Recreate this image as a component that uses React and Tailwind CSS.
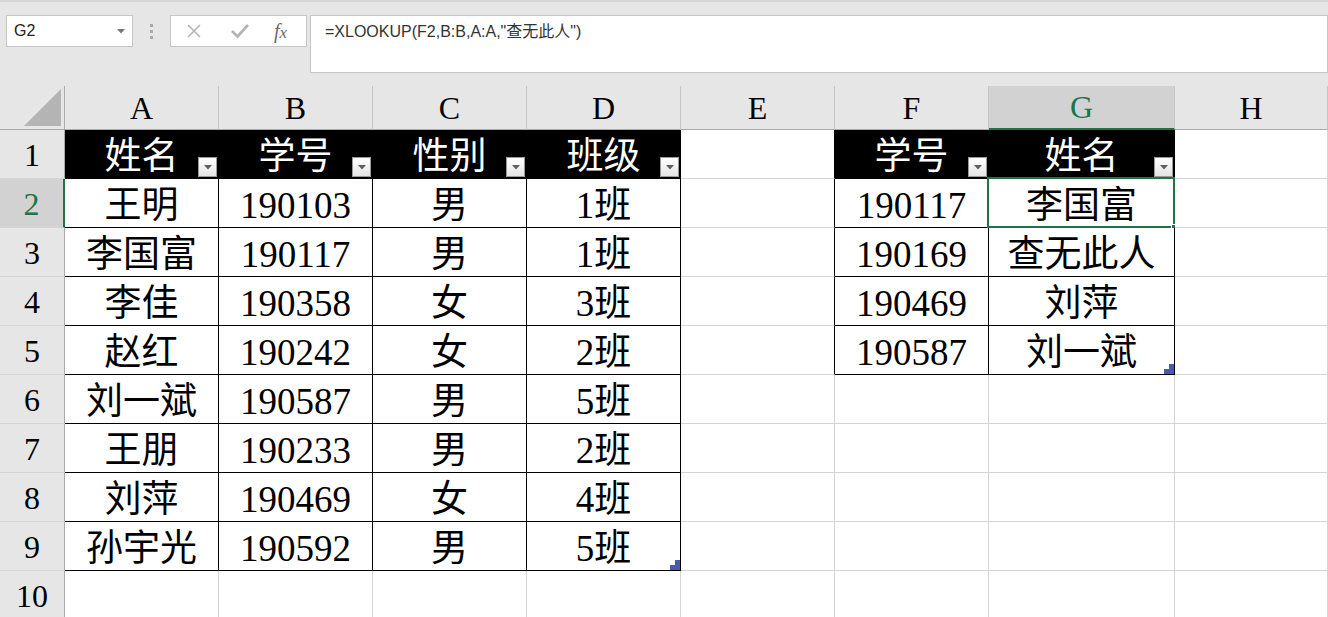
import React from "react";

const cols = ["A", "B", "C", "D", "E", "F", "G", "H"];

const table1 = [
  ["姓名", "学号", "性别", "班级"],
  ["王明", "190103", "男", "1班"],
  ["李国富", "190117", "男", "1班"],
  ["李佳", "190358", "女", "3班"],
  ["赵红", "190242", "女", "2班"],
  ["刘一斌", "190587", "男", "5班"],
  ["王朋", "190233", "男", "2班"],
  ["刘萍", "190469", "女", "4班"],
  ["孙宇光", "190592", "男", "5班"],
];

const table2 = [
  ["学号", "姓名"],
  ["190117", "李国富"],
  ["190169", "查无此人"],
  ["190469", "刘萍"],
  ["190587", "刘一斌"],
];

const FilterButton = () => (
  <div className="absolute right-[1px] bottom-[1px] w-[19px] h-[20px] bg-gradient-to-b from-white to-[#e4e4e4] border border-[#9a9a9a] flex items-center justify-center">
    <svg width="8" height="5" viewBox="0 0 8 5">
      <polygon points="0,0 8,0 4,4.5" fill="#5f5f5f" />
    </svg>
  </div>
);

const ResizeMark = () => (
  <svg className="absolute right-0 bottom-0" width="10" height="10" viewBox="0 0 10 10">
    <polygon points="5,0 10,0 10,10 0,10 0,5 5,5" fill="#4a5bae" />
  </svg>
);

const getCell = (row, col) => {
  // row: 1..10, col: 0..7 (A..H)
  const cell = { text: "", header: false, right: "grid", bottom: "grid", mark: false };
  if (row <= 9 && col <= 3) {
    cell.text = table1[row - 1][col];
    cell.header = row === 1;
    cell.right = "black";
    cell.bottom = "black";
    cell.mark = row === 9 && col === 3;
  }
  if (row <= 5 && col === 4) cell.right = "black";
  if (row <= 5 && (col === 5 || col === 6)) {
    cell.text = table2[row - 1][col - 5];
    cell.header = row === 1;
    cell.right = "black";
    cell.bottom = "black";
    cell.mark = row === 5 && col === 6;
  }
  return cell;
};

const Cell = ({ row, col }) => {
  const c = getCell(row, col);
  const selected = row === 2 && col === 6;
  return (
    <div
      className={`relative flex items-center justify-center pt-[4px] border-r border-b ${
        c.right === "black" ? "border-r-black" : "border-r-[#d4d4d4]"
      } ${c.bottom === "black" ? "border-b-black" : "border-b-[#d4d4d4]"} ${
        c.header ? "bg-black text-white" : "bg-white text-black"
      }`}
    >
      <span className="leading-none whitespace-nowrap">{c.text}</span>
      {c.header && <FilterButton />}
      {c.mark && <ResizeMark />}
      {selected && (
        <>
          <div className="absolute -left-[2px] -top-[2px] -right-[1px] -bottom-[1px] border-2 border-[#217346] pointer-events-none" />
          <div className="absolute -right-[4px] -bottom-[4px] w-[7px] h-[7px] bg-[#217346] border border-white" />
        </>
      )}
    </div>
  );
};

export default function App() {
  return (
    <div className="w-[1328px] h-[617px] overflow-hidden bg-white font-['Liberation_Sans','Noto_Sans_CJK_SC',sans-serif]">
      {/* formula bar */}
      <div className="h-[86px] bg-[#e6e6e6] border-t-2 border-t-[#d6d6d6] flex items-start pt-[13px]">
        <div className="ml-[6px] w-[127px] h-[32px] bg-white border border-[#c6c6c6] flex items-center justify-between pl-[7px] pr-[7px]">
          <span className="text-[16px] text-[#222]">G2</span>
          <svg width="8" height="5" viewBox="0 0 8 5">
            <polygon points="0,0 8,0 4,4.5" fill="#777" />
          </svg>
        </div>
        <div className="w-[37px] h-[32px] flex flex-col items-center justify-center gap-[3px]">
          <span className="w-[3px] h-[3px] bg-[#a8a8a8]" />
          <span className="w-[3px] h-[3px] bg-[#a8a8a8]" />
          <span className="w-[3px] h-[3px] bg-[#a8a8a8]" />
        </div>
        <div className="w-[137px] h-[32px] bg-white border border-[#c6c6c6] flex items-center">
          <svg className="ml-[15px]" width="16" height="16" viewBox="0 0 16 16">
            <path d="M2 2 L14 14 M14 2 L2 14" stroke="#b4b4b4" strokeWidth="1.6" fill="none" />
          </svg>
          <svg className="ml-[29px]" width="18" height="16" viewBox="0 0 18 16">
            <path d="M1 8 L6.5 13.5 L17 2" stroke="#b4b4b4" strokeWidth="2.6" fill="none" />
          </svg>
          <span className="ml-[25px] text-[20px] leading-none italic text-[#6a6a6a] font-['Liberation_Serif',serif]">
            f<span className="text-[17px]">x</span>
          </span>
        </div>
        <div className="ml-[3px] flex-1 h-[58px] bg-white border border-[#c6c6c6] pl-[14px] pt-[4px]">
          <span className="text-[16px] text-[#333]">=XLOOKUP(F2,B:B,A:A,"查无此人")</span>
        </div>
      </div>

      {/* sheet */}
      <div className="grid grid-cols-[65px_154px_154px_154px_154px_154px_154px_186px_1fr] grid-rows-[44px_repeat(10,49px)] font-['Liberation_Serif','Noto_Sans_CJK_SC',serif] text-[37px]">
        {/* corner */}
        <div className="relative bg-[#e6e6e6] border-r border-b border-r-[#ababab] border-b-[#ababab]">
          <svg className="absolute right-[3px] bottom-[3px]" width="37" height="37" viewBox="0 0 37 37">
            <polygon points="37,0 37,37 0,37" fill="#b4b4b4" />
          </svg>
        </div>
        {cols.map((c) => (
          <div
            key={c}
            className={`flex items-center justify-center text-[32px] border-r border-r-[#c6c6c6] ${
              c === "G"
                ? "bg-[#d2d2d2] text-[#217346] border-b-2 border-b-[#217346]"
                : "bg-[#e6e6e6] text-black border-b border-b-[#ababab]"
            }`}
          >
            {c}
          </div>
        ))}
        {Array.from({ length: 10 }, (_, i) => i + 1).map((row) => (
          <React.Fragment key={row}>
            <div
              className={`flex items-center justify-center text-[32px] pt-[2px] border-b border-b-[#d4d4d4] ${
                row === 2
                  ? "bg-[#d2d2d2] text-[#217346] border-r-2 border-r-[#217346]"
                  : "bg-[#e6e6e6] text-black border-r border-r-[#ababab]"
              }`}
            >
              {row}
            </div>
            {cols.map((c, ci) => (
              <Cell key={c} row={row} col={ci} />
            ))}
          </React.Fragment>
        ))}
      </div>
    </div>
  );
}
